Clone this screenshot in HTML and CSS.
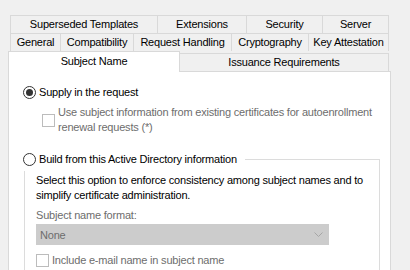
FILE: index.html
```html
<!DOCTYPE html>
<html>
<head>
<meta charset="utf-8">
<link rel="stylesheet" href="styles.css">
</head>
<body>
<div class="dialog">
  <div class="tabrow">
    <div class="tab w147">Superseded Templates</div>
    <div class="tab w89">Extensions</div>
    <div class="tab w76">Security</div>
    <div class="tab w67 last">Server</div>
  </div>
  <div class="tabrow">
    <div class="tab w50">General</div>
    <div class="tab w73">Compatibility</div>
    <div class="tab w98">Request Handling</div>
    <div class="tab w77">Cryptography</div>
    <div class="tab w81 last">Key Attestation</div>
  </div>
  <div class="tabrow3">
    <div class="tab selected">Subject Name</div>
    <div class="tab w209 last">Issuance Requirements</div>
  </div>
  <div class="panel">
    <div class="opt">
      <span class="radio checked"></span>
      <span class="label">Supply in the request</span>
    </div>
    <div class="subopt">
      <span class="check"></span>
      <span class="label disabled">Use subject information from existing certificates for autoenrollment<br>renewal requests (*)</span>
    </div>
    <div class="group">
      <div class="grouphead">
        <div class="opt">
          <span class="radio"></span>
          <span class="label">Build from this Active Directory information</span>
        </div>
        <div class="headline"></div>
      </div>
      <div class="groupbody">
        <p class="desc">Select this option to enforce consistency among subject names and to<br>simplify certificate administration.</p>
        <p class="fieldlabel disabled">Subject name format:</p>
        <div class="combo">
          <span class="disabled">None</span>
          <svg class="chev" width="9" height="5" viewBox="0 0 9 5"><path d="M0.5 0.5 L4.5 4.5 L8.5 0.5" fill="none" stroke="#a6a6a6" stroke-width="1"/></svg>
        </div>
        <div class="checkrow">
          <span class="check"></span>
          <span class="label disabled">Include e-mail name in subject name</span>
        </div>
      </div>
    </div>
  </div>
</div>
</body>
</html>
```
FILE: styles.css
```css
html, body {
  margin: 0;
  padding: 0;
  background: #f0f0f0;
  overflow: hidden;
}
body {
  font-family: "Liberation Sans", Arial, sans-serif;
  font-size: 11px;
  letter-spacing: -0.2px;
  color: #000;
  height: 270px;
}
.dialog {
  padding-top: 15px;
  padding-left: 8px;
  width: 383px;
}
.tabrow {
  display: flex;
  margin-left: 2px;
  width: 379px;
  height: 18px;
}
.tab {
  box-sizing: border-box;
  height: 18px;
  border-top: 1px solid #d9d9d9;
  border-left: 1px solid #d9d9d9;
  background: #f0f0f0;
  text-align: center;
  line-height: 17px;
  white-space: nowrap;
}
.tab.last { border-right: 1px solid #d9d9d9; }
.w147 { width: 147px; }
.w89 { width: 89px; }
.w76 { width: 76px; }
.w67 { width: 67px; }
.w50 { width: 50px; }
.w73 { width: 73px; }
.w98 { width: 98px; }
.w77 { width: 77px; }
.w81 { width: 81px; }
.w209 { width: 209px; }
.tabrow3 {
  display: flex;
  align-items: flex-end;
  height: 20px;
  width: 381px;
}
.tab.selected {
  width: 172px;
  height: 21px;
  margin-bottom: -1px;
  background: #fff;
  border-right: 1px solid #d9d9d9;
  line-height: 19px;
  position: relative;
  z-index: 1;
}
.tabrow3 .tab.selected + .tab { border-left: none; }
.panel {
  box-sizing: border-box;
  width: 383px;
  height: 201px;
  background: #fff;
  border: 1px solid #d9d9d9;
  border-bottom: none;
  padding: 13px 0 0 14px;
  overflow: hidden;
}
.opt {
  display: flex;
  align-items: center;
  height: 15px;
  line-height: 15px;
}
.radio {
  box-sizing: border-box;
  width: 13px;
  height: 13px;
  border: 1px solid #333;
  border-radius: 50%;
  background: #fff;
  margin-right: 3px;
  flex: none;
  display: flex;
  align-items: center;
  justify-content: center;
}
.radio.checked::after {
  content: "";
  width: 7px;
  height: 7px;
  border-radius: 50%;
  background: #333;
}
.label { white-space: nowrap; line-height: 15px; }
.disabled { color: #6d6d6d; }
.subopt {
  display: flex;
  align-items: center;
  margin: 5px 0 0 19px;
}
.check {
  box-sizing: border-box;
  width: 13px;
  height: 13px;
  border: 1px solid #bcbcbc;
  background: #fff;
  margin-right: 3px;
  flex: none;
}
.group {
  margin-top: 17px;
  width: 357px;
}
.grouphead {
  display: flex;
  height: 19px;
}
.headline {
  flex: 1;
  margin: 7px 0 0 8px;
  border-top: 1px solid #dcdcdc;
  border-right: 1px solid #dcdcdc;
}
.groupbody {
  margin-left: 1px;
  border-left: 1px solid #dcdcdc;
  border-right: 1px solid #dcdcdc;
  padding: 2px 0 3px 11px;
}
.groupbody p {
  margin: 0;
  line-height: 15px;
  white-space: nowrap;
}
.fieldlabel { margin-top: 5px !important; }
.combo {
  box-sizing: border-box;
  width: 293px;
  height: 21px;
  margin-top: 1px;
  background: #cccccc;
  border: 1px solid #cccccc;
  display: flex;
  align-items: center;
  justify-content: space-between;
  padding: 0 5px 0 3px;
}
.chev { display: block; }
.checkrow {
  display: flex;
  align-items: center;
  height: 15px;
  margin-top: 8px;
}
```
